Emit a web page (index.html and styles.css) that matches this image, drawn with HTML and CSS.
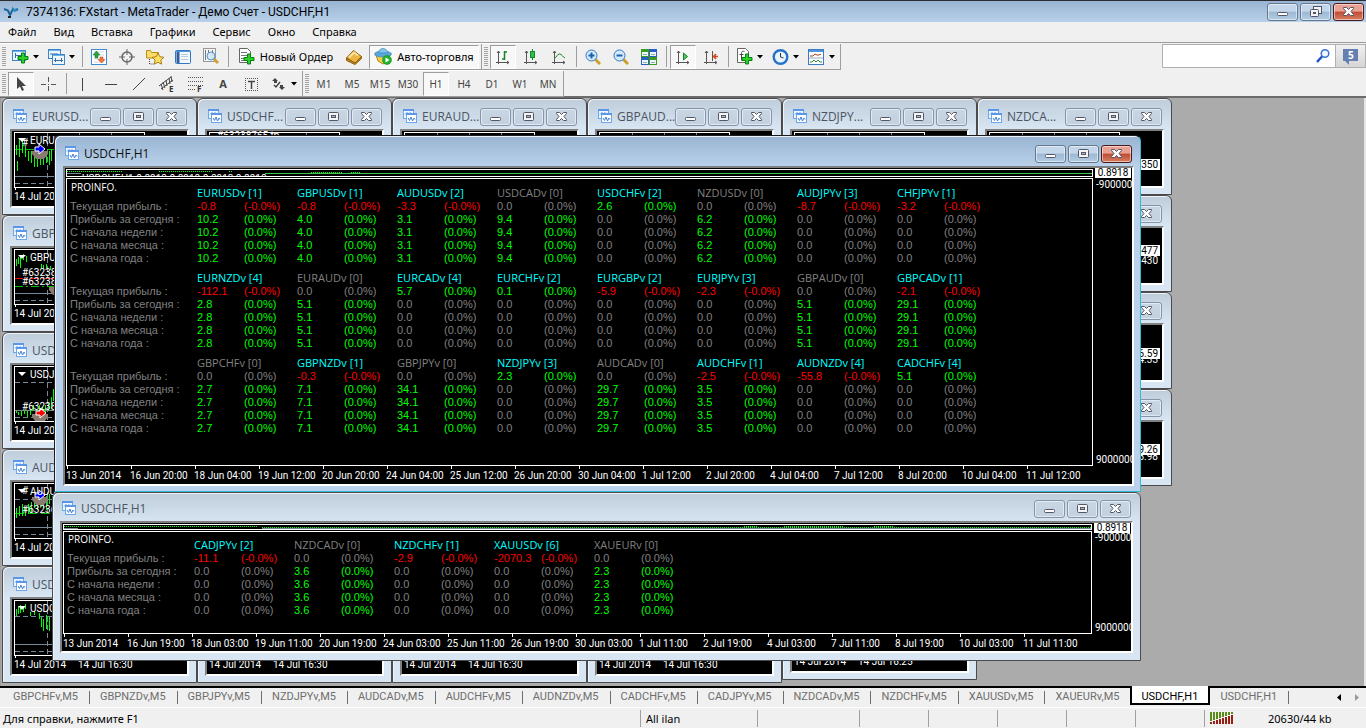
FILE: index.html
```
<!DOCTYPE html>
<html lang="ru">
<head>
    <meta charset="UTF-8">
    <meta name="viewport" content="width=device-width, initial-scale=1.0">
    <title>7374136: FXstart - MetaTrader - Демо Счет - USDCHF,H1</title>
    <link rel="stylesheet" href="styles.css">
</head>
<body>
    <!-- Shared icons -->
    <svg class="sprite" aria-hidden="true">
        <symbol id="i-min" viewBox="0 0 14 12"><rect x="1.5" y="6.5" width="10" height="3" rx="1" fill="#fff" stroke="#535666"/></symbol>
        <symbol id="i-max" viewBox="0 0 14 12"><rect x="1.5" y="1.5" width="10" height="8" rx="1" fill="#f4f4f4" stroke="#535666"/><rect x="4.5" y="4.5" width="4" height="2" fill="#a9bbd0" stroke="#535666"/></symbol>
        <symbol id="i-restore" viewBox="0 0 14 12"><rect x="4.5" y=".5" width="8" height="7" fill="#f4f4f4" stroke="#535666"/><rect x="1.5" y="3.5" width="8" height="7" rx="1" fill="#f4f4f4" stroke="#535666"/><rect x="4.5" y="6.5" width="2" height="1" fill="#a9bbd0" stroke="#535666"/></symbol>
        <symbol id="i-close" viewBox="0 0 14 12"><path d="M1.5 1.5h3l2 2 2-2h3v1L9 5.500l2.500 3v1h-3l-2-2-2 2h-3v-1L4 5.500l-2.500-3z" fill="#fff" stroke="#535666"/></symbol>
        <symbol id="i-chart" viewBox="0 0 15 15"><rect x=".5" y=".5" width="10" height="9" fill="#eef6ff" stroke="#6ea6ea"/><path d="M0 1h11" stroke="#5b97e6" stroke-width="2"/><path d="M2 5.500l2-2 1 2 2-2 2 2" fill="none" stroke="#5b97e6"/><rect x="3.5" y="4.5" width="10" height="9" fill="#fff" stroke="#6ea6ea"/><path d="M3 5h11" stroke="#5b97e6" stroke-width="2"/><path d="M5 9l1.500 2.500L8 8l1.500 4L11 9l1 1.500" fill="none" stroke="#3f7fd6"/></symbol>
        <symbol id="i-down" viewBox="0 0 6 4"><path d="M0 0h6L3 3.500z" fill="#000"/></symbol>
        <symbol id="i-plus" viewBox="0 0 12 12"><path d="M4.500 1h3v3.500H11v3H7.500V11h-3V7.500H1v-3h3.500z" fill="#28d428" stroke="#0a7d10"/></symbol>
    </svg>

    <header class="titlebar">
        <svg class="app-logo" width="16" height="14" viewBox="0 0 16 14"><path d="M1 4l4 1.500 2 4.500 3-6 2 1.500 3-1.500" fill="none" stroke="#1a6496" stroke-width="2"/><path d="M9 1l2 3 4-1-3 4-2-1z" fill="#2a8fc4"/><path d="M5 11h3v2H5z" fill="#222"/></svg>
        <h1>7374136: FXstart - MetaTrader - Демо Счет - USDCHF,H1</h1>
        <div class="window-buttons">
            <button aria-label="Свернуть"><svg width="14" height="12"><use href="#i-min"/></svg></button>
            <button aria-label="Восстановить"><svg width="14" height="12"><use href="#i-restore"/></svg></button>
            <button class="close" aria-label="Закрыть"><svg width="14" height="12"><use href="#i-close"/></svg></button>
        </div>
    </header>

    <nav class="menubar">
        <a href="#">Файл</a>
        <a href="#">Вид</a>
        <a href="#">Вставка</a>
        <a href="#">Графики</a>
        <a href="#">Сервис</a>
        <a href="#">Окно</a>
        <a href="#">Справка</a>
    </nav>

    <div class="toolbars">
        <div class="toolbar-rows">
            <div class="toolbar">
                <div class="tool-group">
                    <span class="grip"></span>
                    <button class="drop" aria-label="Новый график"><svg width="17" height="16" viewBox="0 0 17 16"><rect x=".5" y="1.500" width="13" height="10" fill="#eef6fd" stroke="#3a86c8"/><path d="M1 2.500h12" stroke="#6fb1e6"/><path d="M3.500 4v5M3 6.500h7M9.500 4v3" stroke="#3a6ea0"/><use href="#i-plus" x="5" y="3" width="12" height="12"/></svg><svg width="6" height="4"><use href="#i-down"/></svg></button>
                    <button class="drop" aria-label="Профили"><svg width="17" height="16" viewBox="0 0 17 16"><rect x=".5" y=".5" width="12" height="9" fill="#eef6fd" stroke="#3a86c8"/><path d="M1 1.500h11" stroke="#6fb1e6"/><path d="M2 5h8" stroke="#3a6ea0"/><rect x="4.500" y="5.500" width="12" height="10" fill="#eef6fd" stroke="#3a86c8"/><path d="M5 6.500h11" stroke="#6fb1e6"/><path d="M6 11.500h9M7.500 9v4M13.500 9v4" stroke="#3a6ea0"/></svg><svg width="6" height="4"><use href="#i-down"/></svg></button>
                    <span class="sep"></span>
                    <button aria-label="Обзор рынка"><svg width="16" height="16" viewBox="0 0 16 16"><rect x=".5" y=".5" width="15" height="15" fill="#fff" stroke="#3f8bd0"/><path d="M3 3h10M3 6h10M3 10h10M3 13h10" stroke="#cfd8e2"/><path d="M5.500 2L9 6H7v3H4V6H2z" fill="#27a33b" stroke="#11752a" stroke-width=".5"/><path d="M10.500 14L14 10.500h-2V8H9v2.500H7z" fill="#f4743b" stroke="#b8431a" stroke-width=".5"/></svg></button>
                    <button aria-label="Окно данных"><svg width="16" height="16" viewBox="0 0 16 16"><circle cx="8" cy="8" r="5" fill="none" stroke="#666" stroke-width="1.500"/><path d="M8 0v6M8 10v6M0 8h6M10 8h6" stroke="#666"/></svg></button>
                    <button aria-label="Навигатор"><svg width="18" height="16" viewBox="0 0 18 16"><path d="M.5 9V1.500h4l1 2h7V9z" fill="#f9dd6a" stroke="#b98f1c"/><path d="M3.500 10v5h5" fill="none" stroke="#444" stroke-dasharray="1 1"/><path d="M12 4l1.800 3.700 4 .6-3 2.700.8 4.200-3.600-2-3.700 2 .8-4.200-2.900-2.700 4-.6z" fill="#fde25e" stroke="#b07a12"/></svg></button>
                    <button aria-label="Терминал"><svg width="16" height="14" viewBox="0 0 16 14"><rect x=".5" y=".5" width="15" height="13" rx="1" fill="#f2f8fe" stroke="#2f79c4"/><path d="M1 1.500h14" stroke="#4d94dc"/><path d="M3 2v11" stroke="#2f5f9f" stroke-width="3"/><path d="M6 4.500h7M6 6.500h7M6 9.500h7" stroke="#b8cbe0"/></svg></button>
                    <button aria-label="Тестер стратегий"><svg width="18" height="17" viewBox="0 0 18 17"><rect x="1.500" y=".5" width="12" height="13" fill="#f5f5f5" stroke="#999"/><path d="M3.500 2v10M6.500 2v4M10.500 2v6" stroke="#777"/><path d="M11 10l5 5" stroke="#d0a336" stroke-width="3"/><circle cx="9" cy="8" r="4" fill="#cde6fa" fill-opacity=".85" stroke="#5b94c9"/></svg></button>
                    <span class="sep"></span>
                    <button class="with-text order"><svg width="17" height="17" viewBox="0 0 17 17"><path d="M1.500.5h8l3 3v11h-11z" fill="#fff" stroke="#666"/><path d="M3 4.500h6M3 7.500h7M3 10.500h4M3 12.500h4" stroke="#777"/><use href="#i-plus" x="5" y="5" width="12" height="12"/></svg>Новый Ордер</button>
                    <button aria-label="MetaEditor"><svg width="16" height="16" viewBox="0 0 16 16"><path d="M.5 9l7-7.500 8 6-6.500 7z" fill="#eab541" stroke="#8e5f0d"/><path d="M.5 9v2.500l8.500 4 6.500-6V7.500L9 14z" fill="#c08a1f" stroke="#8e5f0d"/><path d="M3 8.500l5-5 4 3" fill="none" stroke="#fbe3a0" stroke-width="2"/></svg></button>
                    <button class="with-text pressed auto"><svg width="18" height="17" viewBox="0 0 18 17"><path d="M2 7l2 6 5 3 5-3 2-6z" fill="#f4cf4d" stroke="#b3851b"/><ellipse cx="9" cy="6" rx="8.500" ry="3" fill="#5aa9dd" stroke="#2f79b0" stroke-width=".6"/><path d="M4.500 5c0-6 9-6 9 0z" fill="#82c3ec" stroke="#2f79b0" stroke-width=".6"/><circle cx="13" cy="12" r="4.500" fill="#23b42e" stroke="#0e7a18" stroke-width=".5"/><path d="M11.500 9.500v5l4-2.500z" fill="#fff"/></svg>Авто-торговля</button>
                </div>
                <div class="tool-group">
                    <span class="grip"></span>
                    <button class="pressed" aria-label="Бары"><svg width="16" height="16" viewBox="0 0 16 16"><path d="M3.500 2v13M1 13.500h13M2 4l1.500-2L5 4M12 12l2 1.500-2 1.500" fill="none" stroke="#555"/><path d="M9.500 2v9M9.500 3H12M7 10h2.500" stroke="#12872a" stroke-width="1.500"/></svg></button>
                    <button aria-label="Свечи"><svg width="16" height="16" viewBox="0 0 16 16"><path d="M3.500 2v13M1 13.500h13M2 4l1.500-2L5 4M12 12l2 1.500-2 1.500" fill="none" stroke="#555"/><path d="M9.500 0v11" stroke="#12872a"/><rect x="7.500" y="2.500" width="4" height="6" fill="#2cc24a" stroke="#12872a"/></svg></button>
                    <button aria-label="Линия"><svg width="16" height="16" viewBox="0 0 16 16"><path d="M3.500 2v13M1 13.500h13M2 4l1.500-2L5 4M12 12l2 1.500-2 1.500" fill="none" stroke="#555"/><path d="M3 10c3-2 3-5 5.500-5s3 3 5.500 4" fill="none" stroke="#12872a"/></svg></button>
                    <span class="sep"></span>
                    <button aria-label="Увеличить"><svg width="16" height="16" viewBox="0 0 16 16"><path d="M10 10l5 5" stroke="#cf9f2d" stroke-width="3"/><circle cx="6.500" cy="6.500" r="5.500" fill="#d3ebfc" stroke="#2c78c0"/><path d="M6.500 3.500v6M3.500 6.500h6" stroke="#1d62ae" stroke-width="2"/></svg></button>
                    <button aria-label="Уменьшить"><svg width="16" height="16" viewBox="0 0 16 16"><path d="M10 10l5 5" stroke="#cf9f2d" stroke-width="3"/><circle cx="6.500" cy="6.500" r="5.500" fill="#d3ebfc" stroke="#2c78c0"/><path d="M3.500 6.500h6" stroke="#1d62ae" stroke-width="2"/></svg></button>
                    <button aria-label="Окна"><svg width="16" height="16" viewBox="0 0 16 16"><path d="M0 0h8v8H0zM8 8h8v8H8z" fill="#399c1f"/><path d="M8 0h8v8H8zM0 8h8v8H0z" fill="#2a5fc4"/><path d="M1 3h6v4H1zM9 3h6v4H9zM1 11h6v4H1zM9 11h6v4H9z" fill="#eef6fb"/><path d="M2 5.500h4M10 5.500h4M2 13.500h4M10 13.500h4" stroke="#8fb4a0"/></svg></button>
                    <span class="sep"></span>
                    <button class="pressed" aria-label="Автопрокрутка"><svg width="16" height="16" viewBox="0 0 16 16"><path d="M3.500 2v13M1 13.500h13M2 4l1.500-2L5 4M12 12l2 1.500-2 1.500" fill="none" stroke="#555"/><path d="M8.500 4v7l4-3.500z" fill="#52c765" stroke="#12872a"/></svg></button>
                    <button aria-label="Сдвиг графика"><svg width="16" height="16" viewBox="0 0 16 16"><path d="M3.500 2v13M1 13.500h13M2 4l1.500-2L5 4M12 12l2 1.500-2 1.500M9.500 2v10" fill="none" stroke="#555"/><path d="M15 7.500h-4M13 5l-2.500 2.500L13 10" fill="none" stroke="#d2451c" stroke-width="1.500"/></svg></button>
                    <span class="sep"></span>
                    <button class="drop" aria-label="Индикаторы"><svg width="17" height="17" viewBox="0 0 17 17"><path d="M1.500.5h8l3 3v11h-11z" fill="#fff" stroke="#666"/><path d="M8.500 3.500c-3-1-3 1-3 3v6M3.500 6.500h4" fill="none" stroke="#444"/><use href="#i-plus" x="5" y="5" width="12" height="12"/></svg><svg width="6" height="4"><use href="#i-down"/></svg></button>
                    <button class="drop" aria-label="Периоды"><svg width="17" height="16" viewBox="0 0 17 16"><circle cx="8.500" cy="8" r="6.800" fill="#e9f3fb" stroke="#2572c8" stroke-width="2.400"/><path d="M8.500 4v4l3 1" fill="none" stroke="#333"/></svg><svg width="6" height="4"><use href="#i-down"/></svg></button>
                    <button class="drop" aria-label="Шаблоны"><svg width="17" height="16" viewBox="0 0 17 16"><rect x=".5" y=".5" width="15" height="15" fill="#fff" stroke="#3a7cc4"/><path d="M1 2h14" stroke="#4d94dc" stroke-width="2"/><path d="M2 7h3l2-2 2 1h2l2-1" fill="none" stroke="#a33b2a"/><path d="M1 9h14" stroke="#9ab"/><path d="M2 13h2l2-2 2 2 2-2 2 2h2" fill="none" stroke="#2b8f3c"/></svg><svg width="6" height="4"><use href="#i-down"/></svg></button>
                </div>
            </div>
            <div class="toolbar">
                <div class="tool-group">
                    <span class="grip"></span>
                    <button class="pressed" aria-label="Курсор"><svg width="16" height="16" viewBox="0 0 16 16"><path d="M4 1v12l3-2.500 2 4.500 2-1-2-4h4z" fill="#444"/></svg></button>
                    <button aria-label="Перекрестие"><svg width="16" height="16" viewBox="0 0 16 16"><path d="M7.500 1v5M7.500 10v5M0 8.500h5M10 8.500h5M7 8.500h1" stroke="#555"/></svg></button>
                    <span class="sep"></span>
                    <button aria-label="Вертикальная линия"><svg width="16" height="16" viewBox="0 0 16 16"><path d="M7.500 2v13" stroke="#444"/></svg></button>
                    <button aria-label="Горизонтальная линия"><svg width="16" height="16" viewBox="0 0 16 16"><path d="M2 8.500h12" stroke="#444"/></svg></button>
                    <button aria-label="Трендовая линия"><svg width="16" height="16" viewBox="0 0 16 16"><path d="M2 14L14 2" stroke="#444"/></svg></button>
                    <button aria-label="Равноудаленный канал"><svg width="18" height="18" viewBox="0 0 18 18"><path d="M1 11L13 2M3 14L15 5M3 9l2 6M5 7l2 6M8 5l1 6M11 3l1 6M13 1l1 6" stroke="#444"/><text class="icon-text" x="11" y="17">E</text></svg></button>
                    <button aria-label="Линии Фибоначчи"><svg width="18" height="18" viewBox="0 0 18 18"><path d="M2 2.500h15M2 6.500h15M2 10.500h15M2 14.500h8" stroke="#555" stroke-dasharray="1 1"/><text class="icon-text" x="11" y="17">F</text></svg></button>
                    <button class="text-tool">A</button>
                    <button aria-label="Текстовая метка"><svg width="16" height="16" viewBox="0 0 16 16"><path d="M2 2.500h13M2 14.500h13M2.500 2v13M14.500 2v13" stroke="#555" stroke-dasharray="1 1"/><path d="M5 5.500h7M8.500 5v8" stroke="#444" stroke-width="1.500"/></svg></button>
                    <button class="drop" aria-label="Стрелки"><svg width="17" height="16" viewBox="0 0 17 16"><path d="M5 2L2 5h2v2h3V5h1zM12 14l3-3h-2V9h-3v2H9z" fill="#444"/><path d="M4 9l2 2 4-5" fill="none" stroke="#444" stroke-width="1.500"/></svg><svg width="6" height="4"><use href="#i-down"/></svg></button>
                </div>
                <div class="tool-group periods">
                    <span class="grip"></span>
                    <button>M1</button>
                    <button>M5</button>
                    <button>M15</button>
                    <button>M30</button>
                    <button class="pressed">H1</button>
                    <button>H4</button>
                    <button>D1</button>
                    <button>W1</button>
                    <button>MN</button>
                </div>
            </div>
        </div>
        <form class="search">
            <input type="text" aria-label="Поиск">
            <svg width="16" height="16" viewBox="0 0 16 16"><circle cx="10" cy="5.500" r="3.800" fill="#eef6ff" stroke="#3a72d2" stroke-width="1.500"/><path d="M7 8.500L2 14" stroke="#1f4fc0" stroke-width="2.400"/></svg>
            <button type="button" aria-label="Сообщения"><svg width="17" height="17" viewBox="0 0 17 17"><path d="M1 1h15v12H7v4l-4-4H1z" fill="#6580b0"/><text class="badge" x="6" y="11">5</text></svg></button>
        </form>
    </div>

    <main class="desktop" id="desktop">
        <!-- Chart windows are built in script.js -->
    </main>

    <nav class="chart-tabs">
        <div class="tab-list" id="tab-list"></div>
        <div class="tab-scroll">
            <button aria-label="Назад"><svg width="4" height="7" viewBox="0 0 4 7"><path d="M4 0v7L0 3.500z" fill="#000"/></svg></button>
            <button aria-label="Вперед"><svg width="4" height="7" viewBox="0 0 4 7"><path d="M0 0v7l4-3.500z" fill="#999"/></svg></button>
        </div>
    </nav>

    <footer class="statusbar">
        <span class="hint">Для справки, нажмите F1</span>
        <span class="w-profile">All ilan</span>
        <span class="w-time"></span>
        <span class="w-price"></span>
        <span class="w-price"></span>
        <span class="w-price"></span>
        <span class="w-price"></span>
        <span class="w-price"></span>
        <span class="traffic">
            <svg width="23" height="12" viewBox="0 0 23 12"><path d="M1 0v9M4 0v8M7 0v7M10 0v6M13 0v5M16 0v4M19 0v3M22 0v2" stroke="#5c8a16" stroke-width="2"/><path d="M1 12v-2M4 12V9M7 12V8M10 12V7M13 12V6M16 12V5M19 12V4M22 12V3" stroke="#961e12" stroke-width="2"/></svg>
            <b>20630/44 kb</b>
        </span>
    </footer>

    <script src="script.js"></script>
</body>
</html>
```
FILE: styles.css
```
* {
    box-sizing: border-box;
}

body {
    margin: 0;
    height: 100vh;
    display: flex;
    flex-direction: column;
    overflow: hidden;
    background-color: #f0f0f0;
    color: #000;
    font-family: "Noto Sans", "Open Sans", sans-serif;
    font-size: 11px;
}

button {
    font: inherit;
    color: inherit;
    background: none;
    border: none;
    padding: 0;
}

svg {
    display: block;
    flex: none;
}

.sprite {
    position: absolute;
    width: 0;
    height: 0;
}

/* Main title bar */
.titlebar {
    flex: none;
    display: flex;
    align-items: center;
    height: 22px;
    padding: 0 2px 0 3px;
    border-top: 1px solid #2b2d33;
    background: linear-gradient(#98b4d2, #b9d1ea);
}

.titlebar h1 {
    flex: 1;
    margin: 0 0 0 7px;
    font-family: Roboto, "Open Sans", sans-serif;
    font-size: 12px;
    font-weight: normal;
}

.window-buttons {
    display: flex;
    gap: 2px;
}

.window-buttons button {
    display: flex;
    align-items: center;
    justify-content: center;
    width: 31px;
    height: 18px;
    border: 1px solid #66798f;
    border-radius: 3px;
    box-shadow: inset 0 0 0 1px rgba(255, 255, 255, 0.5);
    background: linear-gradient(#c3d6ea 45%, #9db8d3 50%, #b4cde6);
}

.window-buttons .close {
    border-color: #4c1a1a;
    background: linear-gradient(#e8a192 45%, #c04a32 50%, #d68163);
}

/* Menu */
.menubar {
    flex: none;
    display: flex;
    align-items: center;
    gap: 17px;
    height: 20px;
    padding: 0 0 2px 8px;
}

.menubar a {
    color: #000;
    text-decoration: none;
}

/* Toolbars */
.toolbars {
    flex: none;
    display: flex;
    justify-content: space-between;
    height: 56px;
    border-top: 1px solid #9d9d9d;
    border-bottom: 2px solid #6c6c6c;
}

.toolbar {
    display: flex;
    width: max-content;
    height: 27px;
    border-top: 1px solid #fff;
    border-bottom: 1px solid #9d9d9d;
}

.tool-group {
    display: flex;
    align-items: center;
    padding-right: 1px;
    border-right: 1px solid #9d9d9d;
}

.grip {
    width: 4px;
    height: 20px;
    margin: 0 1px 0 2px;
    background: repeating-linear-gradient(#a5a5a5 0 1px, #f0f0f0 1px 2px);
}

.tool-group button {
    display: flex;
    align-items: center;
    justify-content: center;
    width: 26px;
    height: 24px;
    margin: 0 1px;
}

.tool-group .pressed {
    background-color: #f8f8f8;
    border: 1px solid #9d9d9d;
    border-right-color: #fff;
    border-bottom-color: #fff;
}

.tool-group .drop {
    width: 34px;
    gap: 4px;
}

.tool-group .with-text {
    gap: 5px;
}

.tool-group .order {
    width: 107px;
}

.tool-group .auto {
    width: 110px;
}

.tool-group .text-tool {
    color: #444;
    font-weight: bold;
}

.icon-text {
    font-size: 8px;
    font-weight: bold;
    fill: #333;
}

.sep {
    width: 1px;
    height: 21px;
    margin: 0 2px 0 3px;
    background-color: #9d9d9d;
}

.periods {
    color: #444;
    font-size: 10px;
}

.search {
    display: flex;
    align-items: center;
    width: 204px;
    height: 24px;
    margin: 1px 0 0;
    border: 1px solid #b0b0b0;
    background-color: #fff;
}

.search input {
    flex: 1;
    min-width: 0;
    height: 20px;
    border: none;
    outline: none;
}

.search button {
    display: flex;
    align-items: center;
    justify-content: center;
    width: 30px;
    height: 22px;
    margin-left: 4px;
    border-left: 1px solid #b0b0b0;
    background: linear-gradient(#f0f0f0, #d5d5d5);
}

.badge {
    font-size: 10px;
    font-weight: bold;
    fill: #fff;
}

/* Desktop with chart windows */
.desktop {
    flex: 1;
    position: relative;
    overflow: hidden;
    background-color: #ababab;
    border-left: 1px solid #9d9d9d;
    border-right: 2px solid #e4e4e4;
}

.window {
    position: absolute;
    display: flex;
    flex-direction: column;
    padding: 0 7px 6px;
    border: 1px solid #4b4b4d;
    border-radius: 6px 6px 0 0;
    box-shadow: inset 1px 1px 0 #eef3f8;
    background: linear-gradient(#bfcddb, #d8e5f2 30px);
}

.window.active {
    padding: 0 6px 5px 8px;
    border-color: #1c1c20 #35b8d4 #35b8d4 #1c1c20;
    background: linear-gradient(#98b4d2, #b9d1ea 30px);
    z-index: 2;
}

.window.short {
    padding-bottom: 7px;
}

.window-title {
    flex: none;
    display: flex;
    align-items: center;
    height: 30px;
    padding: 5px 2px 0 3px;
}

.active .window-title {
    padding-left: 2px;
}

.short .window-title {
    height: 28px;
    padding: 3px 2px 0;
}

.window-title h2 {
    flex: 1;
    margin: 0 0 0 4px;
    color: #4c5562;
    font-family: "Open Sans", sans-serif;
    font-size: 12px;
    font-weight: normal;
    white-space: nowrap;
}

.active .window-title h2 {
    color: #111;
}

.window-title .window-buttons button {
    border-color: #8793ab;
    background: linear-gradient(#c9d6e3, #c2d0df);
}

.active .window-title .window-buttons button {
    border-color: #66798f;
    background: linear-gradient(#c3d6ea 45%, #9db8d3 50%, #b4cde6);
}

.active .window-title .window-buttons .close {
    border-color: #4c1a1a;
    background: linear-gradient(#e8a192 45%, #c04a32 50%, #d68163);
}

.chart {
    flex: 1;
    min-height: 0;
    overflow: hidden;
    border: 2px solid #fff;
    border-top-color: #808080;
    border-left-color: #808080;
    background-color: #000;
    color: #fff;
}

.chart-text {
    fill: #fff;
    font-family: Roboto, sans-serif;
    font-size: 10px;
}

.chart-text.dark {
    fill: #000;
}

/* Report windows */
.report {
    display: grid;
    grid-template-columns: 1fr 39px;
    grid-template-rows: 8px 1fr 17px;
    row-gap: 1px;
    padding: 1px 0 0 1px;
    font-family: Roboto, sans-serif;
    font-size: 10px;
}

.short .report {
    grid-template-rows: 6px 1fr 16px;
}

.strip {
    border: 1px solid #fff;
    overflow: hidden;
}

.strip svg {
    width: 100%;
}

.panel {
    grid-column: 1;
    border: 1px solid #fff;
    padding: 2px 3px;
    color: #808080;
}

.short .panel {
    padding-top: 1px;
}

.panel p {
    margin: 0 1px -7px;
    font-family: "Open Sans", sans-serif;
    line-height: 13px;
    color: #fff;
}

.panel table {
    border-collapse: collapse;
    table-layout: fixed;
    width: max-content;
    margin-bottom: 7px;
    font-family: "Liberation Sans", sans-serif;
    font-size: 11px;
    line-height: 13px;
}

.panel th,
.panel td {
    padding: 0;
    text-align: left;
    font-weight: normal;
    white-space: nowrap;
}

.panel thead th {
    height: 13px;
    font-family: "Open Sans", sans-serif;
    line-height: 11px;
    vertical-align: top;
}

.col-label {
    width: 127px;
}

.col-value {
    width: 47px;
}

.col-percent {
    width: 53px;
}

.panel .on {
    color: #00ffff;
}

.panel .up {
    color: #00ff00;
}

.panel .down {
    color: #ff0000;
}

.price {
    width: 36px;
    height: 11px;
    margin: -2px 0 0 2px;
    background-color: #fff;
    color: #000;
    line-height: 11px;
    text-align: center;
}

.scale {
    display: flex;
    flex-direction: column;
    justify-content: space-between;
    padding-left: 3px;
    line-height: 13px;
    overflow: hidden;
}

.dates {
    display: flex;
    grid-column: 1 / 3;
    margin-top: -1px;
    line-height: 13px;
}

.dates span {
    width: 64px;
    white-space: nowrap;
}

.dates span::before {
    content: "";
    display: block;
    width: 1px;
    height: 3px;
    margin-left: 1px;
    background-color: #fff;
}

/* Chart tabs */
.chart-tabs {
    flex: none;
    display: flex;
    justify-content: space-between;
    height: 21px;
    border-top: 2px solid #000;
    color: #6e6e6e;
}

.tab-list {
    display: flex;
    padding-left: 3px;
    font-family: Roboto, sans-serif;
}

.tab-list a {
    height: 19px;
    padding: 0 12px 0 10px;
    color: #6e6e6e;
    line-height: 17px;
    text-decoration: none;
    background: linear-gradient(#6e6e6e, #6e6e6e) right 3px / 1px 13px no-repeat;
}

.tab-list .current {
    margin: -2px 0 0 -1px;
    border: 2px solid #000;
    border-top: none;
    background: #fff;
    color: #000;
    padding: 2px 10px 0 9px;
}

.tab-scroll {
    display: flex;
    gap: 14px;
    padding-right: 7px;
}

/* Status bar */
.statusbar {
    flex: none;
    display: flex;
    align-items: center;
    height: 21px;
    padding-left: 3px;
    border-top: 1px solid #fff;
}

.statusbar span {
    height: 17px;
    line-height: 17px;
    padding-left: 5px;
    border-left: 1px solid #a0a0a0;
}

.statusbar .hint {
    flex: 1;
    padding: 0;
    border: none;
}

.w-profile {
    width: 117px;
}

.w-time {
    width: 102px;
}

.w-price {
    width: 69px;
}

.statusbar .traffic {
    display: flex;
    align-items: center;
    gap: 35px;
    width: 162px;
}

.traffic b {
    font-weight: normal;
}
```
FILE: script.js
```
const reports = [
    {
        x: 53, y: 37, w: 1087, h: 357, state: "active",
        line: "USDCHF,H1  0.8913 0.8918 0.8913 0.8918",
        marks: "M0 1.5h55M92 1.5h54M162 1.5h3M244 2.5h32M284 2.5h10M198 3.5h830",
        dates: ["13 Jun 2014", "16 Jun 20:00", "18 Jun 04:00", "19 Jun 12:00", "20 Jun 20:00", "24 Jun 04:00", "25 Jun 12:00", "26 Jun 20:00",
            "30 Jun 04:00", "1 Jul 12:00", "2 Jul 20:00", "4 Jul 04:00", "7 Jul 12:00", "8 Jul 20:00", "10 Jul 04:00", "11 Jul 12:00"],
        // symbol, open orders, current profit, day / week / month / year profit
        groups: [
            [["EURUSDv", 1, -0.8, 10.2], ["GBPUSDv", 1, -0.8, 4], ["AUDUSDv", 2, -3.3, 3.1], ["USDCADv", 0, 0, 9.4], ["USDCHFv", 2, 2.6, 0], ["NZDUSDv", 0, 0, 6.2], ["AUDJPYv", 3, -8.7, 0], ["CHFJPYv", 1, -3.2, 0]],
            [["EURNZDv", 4, -112.1, 2.8], ["EURAUDv", 0, 0, 5.1], ["EURCADv", 4, 5.7, 0], ["EURCHFv", 2, 0.1, 0], ["EURGBPv", 2, -5.9, 0], ["EURJPYv", 3, -2.3, 0], ["GBPAUDv", 0, 0, 5.1], ["GBPCADv", 1, -2.1, 29.1]],
            [["GBPCHFv", 0, 0, 2.7], ["GBPNZDv", 1, -0.3, 7.1], ["GBPJPYv", 0, 0, 34.1], ["NZDJPYv", 3, 2.3, 0], ["AUDCADv", 0, 0, 29.7], ["AUDCHFv", 1, -2.5, 3.5], ["AUDNZDv", 4, -55.8, 0], ["CADCHFv", 4, 5.1, 0]]
        ]
    },
    {
        x: 51, y: 394, w: 1089, h: 169, state: "short",
        line: "",
        marks: "M0 1.5h194M198 2.5h830M680 1.5h14M720 1.5h60M810 1.5h20",
        dates: ["13 Jun 2014", "16 Jun 19:00", "18 Jun 03:00", "19 Jun 11:00", "20 Jun 19:00", "24 Jun 03:00", "25 Jun 11:00", "26 Jun 19:00",
            "30 Jun 03:00", "1 Jul 11:00", "2 Jul 19:00", "4 Jul 03:00", "7 Jul 11:00", "8 Jul 19:00", "10 Jul 03:00", "11 Jul 11:00"],
        groups: [
            [["CADJPYv", 2, -11.1, 0], ["NZDCADv", 0, 0, 3.6], ["NZDCHFv", 1, -2.9, 0], ["XAUUSDv", 6, -2070.3, 0], ["XAUEURv", 0, 0, 2.3]]
        ]
    }
];

const text = (x, y, value) => `<text class="chart-text" x="${x}" y="${y}">${value}</text>`;
const bars = (list) => `<path d="${list.map(([x, a, b]) => `M${x + 0.5} ${a}V${b}`).join("")}" stroke="#00ff00"/>`;
const pentagon = (x, y) => `<path d="M${x - 8} ${y}h16v3l-4 5h-8l-4-5z" fill="#8a7b70"/>`;
const arrow = (x, y, color) => `<path d="M${x - 4} ${y - 2}h4v-3l6 5-6 5v-3h-4z" fill="${color}" stroke="#fff"/>`;
const level = (y, color, dash) => `<path d="M3 ${y}.5h130" stroke="${color}" stroke-dasharray="${dash}"/>`;
const tag = (y, value) => `<path d="M134 ${y}h39v11h-39z" fill="#fff"/><text class="chart-text dark" x="171" y="${y + 9}" text-anchor="end">${value}</text>`;
const priceText = (y, value) => `<text class="chart-text" x="171" y="${y}" text-anchor="end">${value}</text>`;

// Small chart windows: column, row, title, drawing
const charts = [
    [0, 0, "EURUSD...", level(18, "#00c000", "8 3") + bars([[4, 14, 24], [5, 30, 40], [7, 8, 26], [10, 8, 22], [13, 15, 26], [16, 20, 30], [19, 20, 32], [22, 24, 36], [25, 24, 36], [28, 25, 34], [31, 26, 34], [34, 20, 32], [37, 20, 34], [39, 18, 30]]) + pentagon(28, 20) + arrow(27, 18, "#0000ff") + text(10, 15, "#") + text(18, 13, "EURUSD,M5")],
    [0, 1, "GBPUSD...", level(30, "#ff0000", "8 3 2 3") + level(38, "#00c000", "8 3 2 3") + bars([[4, 11, 18], [6, 9, 16], [8, 8, 20], [11, 6, 12], [14, 8, 14], [29, 16, 20], [31, 17, 20], [34, 16, 20], [38, 18, 22]]) + pentagon(45, 39) + text(18, 13, "GBPUSD,M5") + text(10, 28, "#63238") + text(10, 37, "#63238")],
    [0, 2, "USDJPY...", level(17, "#778899", "5 3") + bars([[4, 46, 48], [6, 47, 50], [9, 46, 51], [12, 45, 49], [15, 46, 52], [18, 44, 50], [21, 40, 46], [24, 44, 50], [27, 40, 48], [30, 42, 48], [33, 40, 47], [36, 38, 46], [39, 32, 44], [41, 24, 36]]) + pentagon(28, 49) + arrow(28, 48, "#ff0000") + text(18, 13, "USDJPY,M5") + text(10, 45, "#63238")],
    [0, 3, "AUDUSD...", level(17, "#778899", "5 3") + level(31, "#00c000", "9 4") + bars([[4, 26, 36], [7, 24, 34], [10, 22, 34], [13, 26, 34], [16, 22, 32], [19, 20, 30], [22, 18, 26], [25, 18, 28], [28, 16, 24], [31, 16, 26], [34, 14, 28], [37, 12, 22], [40, 14, 24]]) + pentagon(28, 15) + arrow(27, 13, "#0000ff") + text(10, 12, "#") + text(18, 13, "AUDUSD,M5") + text(10, 31, "#63236")],
    [0, 4, "USDCAD...", level(17, "#778899", "5 3") + bars([[4, 10, 17], [6, 7, 15], [8, 6, 14], [11, 9, 13], [13, 5, 10], [18, 13, 17], [22, 12, 16], [27, 14, 20], [29, 18, 28], [31, 20, 32], [34, 16, 30], [37, 18, 32], [40, 18, 28]]) + text(18, 13, "USDCAD,M5")],
    [1, 0, "USDCHF...", text(10, 8, "#63238765 tp")],
    [2, 0, "EURAUD...", ""],
    [3, 0, "GBPAUD...", ""],
    [4, 0, "NZDJPY...", ""],
    [1, 4, "EURNZD...", ""],
    [2, 4, "EURCAD...", ""],
    [3, 4, "EURCHF...", ""],
    [4, 5, "XAUUSD...", ""],
    [5, 0, "NZDCA...", tag(28, "4350")],
    [5, 1, "NZDCHF...", tag(17, "3477") + priceText(36, "3430")],
    [5, 2, "XAUUSD...", priceText(38, "1304.33") + tag(23, "1306.59")],
    [5, 3, "XAUEUR...", priceText(38, "958.98") + tag(22, "959.26")]
];

const tabs = ["GBPCHFv,M5", "GBPNZDv,M5", "GBPJPYv,M5", "NZDJPYv,M5", "AUDCADv,M5", "AUDCHFv,M5", "AUDNZDv,M5", "CADCHFv,M5",
    "CADJPYv,M5", "NZDCADv,M5", "NZDCHFv,M5", "XAUUSDv,M5", "XAUEURv,M5", "USDCHF,H1", "USDCHF,H1"];
const currentTab = 13;

const labels = ["Текущая прибыль :", "Прибыль за сегодня :", "С начала недели :", "С начала месяца :", "С начала года :"];

function windowTitle(title) {
    return `
        <div class="window-title">
            <svg width="15" height="15"><use href="#i-chart"/></svg>
            <h2>${title}</h2>
            <div class="window-buttons">
                <button aria-label="Свернуть"><svg width="14" height="12"><use href="#i-min"/></svg></button>
                <button aria-label="Развернуть"><svg width="14" height="12"><use href="#i-max"/></svg></button>
                <button class="close" aria-label="Закрыть"><svg width="14" height="12"><use href="#i-close"/></svg></button>
            </div>
        </div>`;
}

function smallWindow([col, row, title, drawing]) {
    const height = col < 4 ? 117 : 97;
    const bottom = height - 61; // bottom line of the plot
    const time = col < 4 ? "14 Jul 16:30" : "14 Jul 16:25";
    return `
        <section class="window" style="left:${1 + col * 195}px; top:${row * height}px; width:195px; height:${height}px">
            ${windowTitle(title)}
            <div class="chart">
                <svg width="175" height="${height - 42}">
                    <path d="M35.5 2V${bottom}M67.5 2V${bottom}M99.5 2V${bottom}" stroke="#778899" stroke-dasharray="5 3"/>
                    <path d="M3 ${bottom - 11}.5h130" stroke="#778899"/>
                    <path d="M3 ${bottom - 4}.5h130" stroke="#778899" stroke-dasharray="5 3"/>
                    ${drawing}
                    <rect x="2.5" y="1.5" width="130" height="${bottom - 1}" fill="none" stroke="#fff"/>
                    <path d="M3.5 ${bottom}v3M67.5 ${bottom}v3" stroke="#fff"/>
                    <path d="M6 7h8l-4 4z" fill="#fff"/>
                    ${text(2, height - 48, "14 Jul 2014")}
                    ${text(66, height - 48, time)}
                </svg>
            </div>
        </section>`;
}

function sign(value) {
    return value > 0 ? "up" : value < 0 ? "down" : "";
}

function reportTable(group) {
    const cols = group.map(() => `<col class="col-value"><col class="col-percent">`).join("");
    const head = group.map(([name, orders]) => `<th colspan="2" class="${orders ? "on" : ""}">${name} [${orders}]</th>`).join("");
    const rows = labels.map((label, i) => {
        const cells = group.map((item) => {
            const value = i === 0 ? item[2] : item[3];
            return `<td class="${sign(value)}">${value.toFixed(1)}</td><td class="${sign(value)}">(${value < 0 ? "-" : ""}0.0%)</td>`;
        }).join("");
        return `<tr><th>${label}</th>${cells}</tr>`;
    }).join("");
    return `<table><colgroup><col class="col-label">${cols}</colgroup><thead><tr><td></td>${head}</tr></thead><tbody>${rows}</tbody></table>`;
}

function reportWindow(report) {
    return `
        <section class="window ${report.state}" style="left:${report.x}px; top:${report.y}px; width:${report.w}px; height:${report.h}px">
            ${windowTitle("USDCHF,H1")}
            <div class="chart report">
                <div class="strip">
                    <svg height="12">
                        <path d="M0 3.5h14M198 3.5h830" stroke="#778899"/>
                        <path d="${report.marks}" stroke="#00ff00" stroke-dasharray="1 1"/>
                        ${text(15, 12, report.line)}
                    </svg>
                </div>
                <div class="price">0.8918</div>
                <div class="panel">
                    <p>PROINFO.</p>
                    ${report.groups.map(reportTable).join("")}
                </div>
                <div class="scale"><span>-90000000</span><span>90000000</span></div>
                <div class="dates">${report.dates.map((date) => `<span>${date}</span>`).join("")}</div>
            </div>
        </section>`;
}

document.getElementById("desktop").innerHTML = charts.map(smallWindow).join("") + reports.map(reportWindow).join("");
document.getElementById("tab-list").innerHTML = tabs.map((tab, i) => `<a href="#" class="${i === currentTab ? "current" : ""}">${tab}</a>`).join("");
```
